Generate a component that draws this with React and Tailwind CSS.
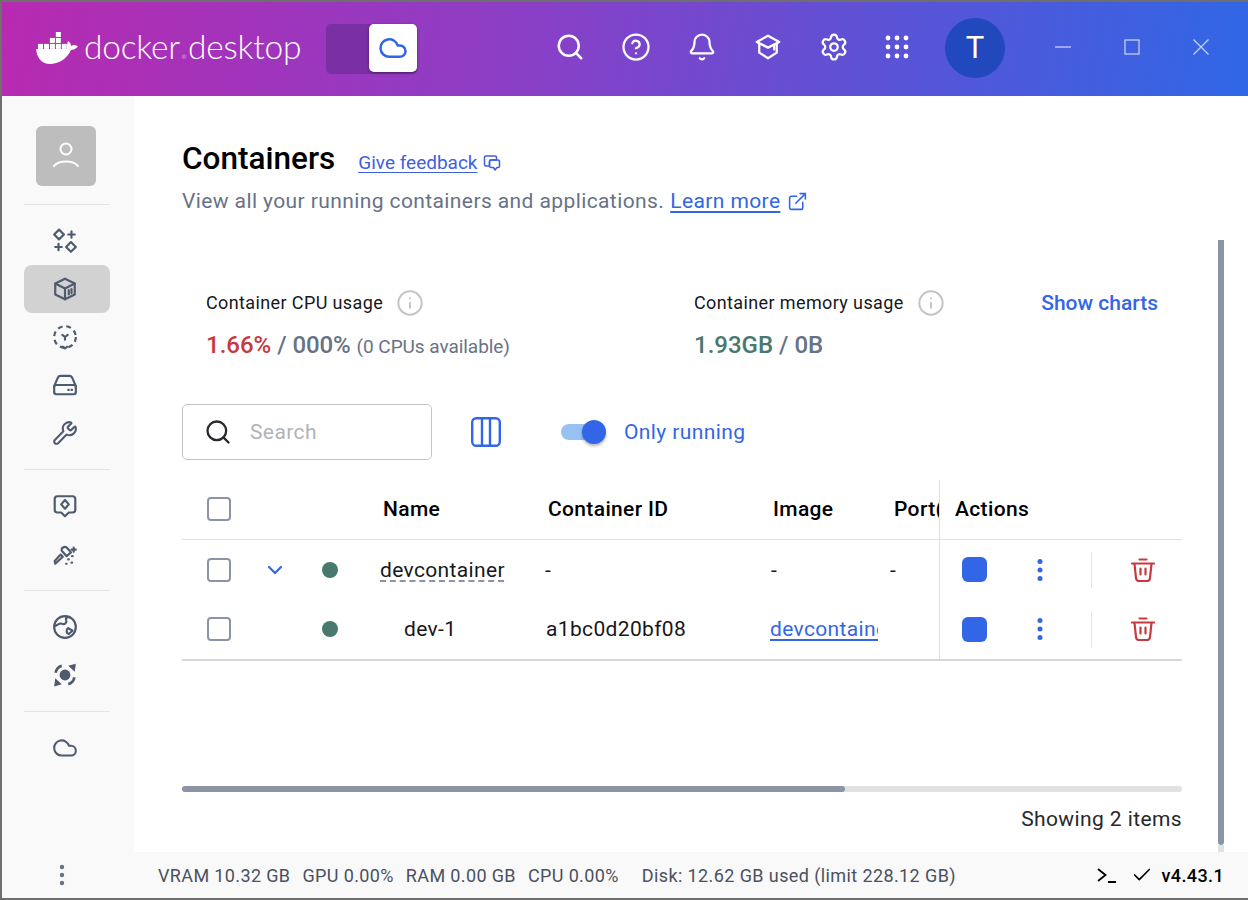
import React from 'react'
import { Search, CircleHelp, Bell, Settings, Cloud, Wrench, Check, ChevronDown, ExternalLink, Info } from 'lucide-react'

const Stroke = ({ size = 24, width = 2, children, className = '' }) => (
  <svg width={size} height={size} viewBox="0 0 24 24" fill="none" stroke="currentColor" strokeWidth={width} strokeLinecap="round" strokeLinejoin="round" className={className}>
    {children}
  </svg>
)

function Whale() {
  const boxes = [
    [21, 0], [14, 7], [21, 7], [7, 14], [14, 14], [21, 14], [0, 14], [28, 14],
  ]
  return (
    <svg width="43" height="34" viewBox="0 0 43 34" fill="white">
      {boxes.map(([x, y]) => (
        <rect key={x + '-' + y} x={x * 0.85 + 2} y={y * 0.85 + 1} width="5" height="5" />
      ))}
      <path d="M0 18 H31 C31 15 31 12 32 10 C34 11 35 13 35 15 C38 13 40 14 42 15.500 C40 18 37 19 35 19 C31 28 22 33 14 33 C6 33 1 27 0 18 Z" />
    </svg>
  )
}

function HeaderBar() {
  return (
    <div className="h-[94px] shrink-0 flex items-center bg-[linear-gradient(100deg,#b72ab0_0%,#8a3fc6_42%,#5c52d6_70%,#2f67e6_100%)] text-white">
      <div className="ml-[34px] mt-[-3px]"><Whale /></div>
      <div className="ml-[5px] mt-[-4px] w-[218px] whitespace-nowrap flex items-baseline font-['Lato',sans-serif] font-light text-[33.500px] leading-none tracking-[-0.2px]">
        <span>docker</span>
        <span className="w-[8px] text-[6px] tracking-normal text-center">®</span>
        <span>desktop</span>
      </div>
      <div className="ml-[24px] mt-[-1px] w-[91px] h-[50px] rounded-[5px] bg-[#7b2fa5] flex justify-end">
        <div className="w-[48px] h-[48px] rounded-[5px] bg-white shadow-[0_1px_3px_rgba(0,0,0,0.4)] flex items-center justify-center text-[#2f66e6]">
          <Cloud size={30} strokeWidth={2} />
        </div>
      </div>
      <div className="ml-[138px] mt-[-4px] flex items-center gap-[36px]">
        <Search size={30} strokeWidth={2} />
        <CircleHelp size={30} strokeWidth={1.8} />
        <Bell size={30} strokeWidth={1.8} />
        <Stroke size={30} width={1.8}>
          <path d="M12 3 L21 8 L12 12.500 L3 8 Z" />
          <path d="M5 9.500 V16.500 L12 21 L19 16.500 V9.500" />
          <path d="M17 10 V14" />
        </Stroke>
        <Settings size={30} strokeWidth={1.8} />
        <svg className="ml-[-3px]" width="30" height="30" viewBox="0 0 30 30" fill="white">
          {[6, 15, 24].map((y) => [6, 15, 24].map((x) => (
            <circle key={x + '-' + y} cx={x} cy={y} r="2.400" />
          )))}
        </svg>
      </div>
      <div className="ml-[33px] mt-[-2px] w-[60px] h-[60px] rounded-full bg-[#2148bc] flex items-center justify-center font-['Roboto',sans-serif] text-[31px]">T</div>
      <div className="ml-[50px] mt-[-4px] flex items-center gap-[53px] text-white/70">
        <svg width="16" height="16" viewBox="0 0 16 16" fill="none" stroke="currentColor" strokeWidth="1.300"><path d="M0 8 H16" /></svg>
        <svg width="16" height="16" viewBox="0 0 16 16" fill="none" stroke="currentColor" strokeWidth="1.300"><rect x="1" y="1" width="14" height="14" /></svg>
        <svg width="16" height="16" viewBox="0 0 16 16" fill="none" stroke="currentColor" strokeWidth="1.300"><path d="M0.500 0.500 L15.500 15.500 M15.500 0.500 L0.500 15.500" /></svg>
      </div>
    </div>
  )
}

function NavItem({ active, children }) {
  return (
    <div className={active ? 'h-[48px] pr-[4px] rounded-[8px] bg-[#d2d2d2] flex items-center justify-center text-[#4e5a6e]' : 'h-[48px] pr-[4px] flex items-center justify-center text-[#4e5a6e]'}>
      {children}
    </div>
  )
}

function Sidebar() {
  return (
    <div className="w-[132px] shrink-0 bg-[#f9f9fa] pt-[30px] pl-[22px] pr-[24px]">
      <div className="ml-[12px] w-[60px] h-[60px] rounded-[6px] bg-[#bdbdbd] flex items-center justify-center text-white">
        <svg width="28" height="28" viewBox="0 0 28 28" fill="none" stroke="currentColor" strokeWidth="2" strokeLinecap="round">
          <circle cx="14" cy="7" r="5.500" />
          <path d="M2 24 C7 18 21 18 26 24" />
        </svg>
      </div>
      <div className="h-px bg-[#e4e4e4] mt-[18px] mb-[12px]" />
      <NavItem>
        <Stroke size={26} width={2}>
          <path d="M6.500 1.500 L11 6 L6.500 10.500 L2 6 Z" />
          <path d="M17.500 13 L22 17.500 L17.500 22 L13 17.500 Z" />
          <path d="M18 3 V9 M15 6 H21 M6 14.500 V20.500 M3 17.500 H9" />
        </Stroke>
      </NavItem>
      <NavItem active>
        <Stroke size={26} width={2}>
          <path d="M12 2.500 L21 7 V17 L12 21.500 L3 17 V7 Z" />
          <path d="M3 7 L12 11.500 L21 7 M12 11.500 V21.500" />
          <path d="M15.500 13 V17 M18 12 V16" />
        </Stroke>
      </NavItem>
      <NavItem>
        <Stroke size={26} width={2}>
          <circle cx="12" cy="12" r="10" strokeDasharray="4.500 3.500" strokeLinecap="butt" />
          <path d="M9.500 10 L12 12 L14.500 10 M12 12 V14.500" />
          <path d="M10 21 L12 22.500 L14 21" />
        </Stroke>
      </NavItem>
      <NavItem>
        <Stroke size={26} width={2}>
          <path d="M2 13 L5.500 5 C6 4 7 3.500 8 3.500 H16 C17 3.500 18 4 18.500 5 L22 13" />
          <rect x="2" y="12" width="20" height="8.500" rx="2" />
          <path d="M15 16.500 H15.500 M18 16.500 H18.500" />
        </Stroke>
      </NavItem>
      <NavItem><Wrench size={26} strokeWidth={1.9} /></NavItem>
      <div className="h-px bg-[#e4e4e4] my-[12px]" />
      <NavItem>
        <Stroke size={26} width={2}>
          <path d="M5 3 H19 C20.500 3 21.500 4 21.500 5.500 V15.500 C21.500 17 20.500 18 19 18 H15.500 L12 21.500 L8.500 18 H5 C3.500 18 2.500 17 2.500 15.500 V5.500 C2.500 4 3.500 3 5 3 Z" />
          <path d="M12 6.500 L15.500 10.500 L12 14.500 L8.500 10.500 Z" />
        </Stroke>
      </NavItem>
      <NavItem>
        <Stroke size={26} width={2}>
          <path d="M3 21 L10 14.500 L8 12.500 L2.500 18.500 Z" />
          <path d="M9 7 C11 5 13 5 14 6.500 L17.500 10.500 L13.500 14 L9 9 Z" />
          <path d="M20 6 V10 M18 8 H22 M15 17 H15.500 M18.500 14 H19 M13 21 H13.500 M18 20 H18.500" />
        </Stroke>
      </NavItem>
      <div className="h-px bg-[#e4e4e4] my-[12px]" />
      <NavItem>
        <Stroke size={26} width={2}>
          <circle cx="12" cy="12" r="10" />
          <path d="M3 11 C6 10 7 8 9 9 C12 10 14 8 13 5 C12.500 3.500 14 2.500 16 3" />
          <path d="M15 13 L19 15.500 L15.500 18.500 C13 18 13 14 15 13 Z" />
        </Stroke>
      </NavItem>
      <NavItem>
        <svg width="26" height="26" viewBox="0 0 24 24" fill="currentColor">
          <circle cx="12" cy="12" r="5" />
          <path d="M22 1.500 L21 9 L15 3.500 Z M2 22.500 L3 15 L9 20.500 Z" />
          <path d="M3.500 10 C3.500 7 6 4 9 3.500" fill="none" stroke="currentColor" strokeWidth="2.500" />
          <path d="M20.500 14 C20.500 17 18 20 15 20.500" fill="none" stroke="currentColor" strokeWidth="2.500" />
        </svg>
      </NavItem>
      <div className="h-px bg-[#e4e4e4] my-[12px]" />
      <NavItem><Cloud size={26} strokeWidth={1.9} /></NavItem>
    </div>
  )
}

function Checkbox() {
  return <div className="w-[24px] h-[24px] rounded-[4px] border-2 border-[#8b93a5] bg-white" />
}

const rowGrid = 'grid grid-cols-[76px_56px_61px_165px_225px_121px_53px_243px]'

function Actions() {
  return (
    <div className="h-full border-l border-[#dfe0e3] flex items-center pl-[22px]">
      <div className="w-[25px] h-[25px] rounded-[6px] bg-[#3366e6]" />
      <div className="ml-[41px] w-[24px] flex justify-center text-[#3366e6]">
        <svg width="6" height="24" viewBox="0 0 6 24" fill="currentColor">
          <circle cx="3" cy="3.500" r="2.500" /><circle cx="3" cy="12" r="2.500" /><circle cx="3" cy="20.500" r="2.500" />
        </svg>
      </div>
      <div className="ml-[39px] w-px h-[36px] bg-[#e6e6e9]" />
      <div className="ml-[39px] text-[#c8393f]">
        <svg width="24" height="24" viewBox="0 0 24 24" fill="none" stroke="currentColor" strokeWidth="2.200" strokeLinecap="round" strokeLinejoin="round">
          <path d="M1 5.500 H23 M8.500 1.500 H15.500" />
          <path d="M3.500 6 L5 20 C5.200 22 6 23 8 23 H16 C18 23 18.800 22 19 20 L20.500 6" />
          <path d="M9.500 10.500 V16.500 M14.500 10.500 V16.500" />
        </svg>
      </div>
    </div>
  )
}

function Table() {
  return (
    <div className="mt-[20px] text-[21px] tracking-[0.35px] text-[#17181a]">
      <div className={rowGrid + ' h-[60px] items-center border-b border-[#dfe0e3] font-medium text-black'}>
        <div className="pl-[25px]"><Checkbox /></div>
        <div />
        <div />
        <div className="pl-[8px] pt-[2px]">Name</div>
        <div className="pl-[8px] pt-[2px]">Container ID</div>
        <div className="pl-[8px] pt-[2px]">Image</div>
        <div className="pl-[8px] pt-[2px] overflow-hidden whitespace-nowrap">Port(s)</div>
        <div className="h-full border-l border-[#dfe0e3] flex items-center pl-[15px] pt-[2px]">Actions</div>
      </div>
      <div className={rowGrid + ' h-[60px] items-center'}>
        <div className="pl-[25px]"><Checkbox /></div>
        <div className="pl-[5px] text-[#3366e6]"><ChevronDown size={24} strokeWidth={2.2} /></div>
        <div className="pl-[8px]"><div className="w-[16px] h-[16px] rounded-full bg-[#47796f]" /></div>
        <div className="pl-[5px] pt-[2px]"><span className="underline decoration-dashed decoration-[#8b93a5] underline-offset-[4px]">devcontainer</span></div>
        <div className="pl-[5px] pt-[2px]">-</div>
        <div className="pl-[6px] pt-[2px]">-</div>
        <div className="pl-[4px] pt-[2px]">-</div>
        <Actions />
      </div>
      <div className={rowGrid + ' h-[61px] items-center border-b-2 border-[#d5d7dc]'}>
        <div className="pl-[25px]"><Checkbox /></div>
        <div />
        <div className="pl-[8px]"><div className="w-[16px] h-[16px] rounded-full bg-[#47796f]" /></div>
        <div className="pl-[29px] pt-[2px]">dev-1</div>
        <div className="pl-[6px] pt-[2px]">a1bc0d20bf08</div>
        <div className="pl-[5px] pt-[2px]">
          <div className="w-[108px] overflow-hidden whitespace-nowrap text-[#3366e6] underline underline-offset-[3px]">devcontainer</div>
        </div>
        <div />
        <Actions />
      </div>
    </div>
  )
}

export default function App() {
  return (
    <div className="w-[1248px] h-[900px] overflow-hidden flex flex-col bg-white border-y-2 border-l-2 border-[#6f6f6f] font-['Roboto',sans-serif]">
      <HeaderBar />
      <div className="flex flex-1 min-h-0">
        <Sidebar />
        <div className="flex-1 flex min-w-0">
          <div className="w-[1000px] ml-[48px] shrink-0">
            <div className="mt-[45px] flex items-center h-[36px]">
              <h1 className="text-[31.500px] font-medium text-black leading-none">Containers</h1>
              <a className="ml-[23px] mt-[8px] text-[19px] text-[#3f60dd] underline underline-offset-[3px]">Give feedback</a>
              <svg className="ml-[5px] mt-[8px] text-[#3f60dd]" width="18" height="18" viewBox="0 0 18 18" fill="none" stroke="currentColor" strokeWidth="1.500" strokeLinejoin="round">
                <path d="M3 2 H12 C13 2 13.500 2.500 13.500 3.500 V6 H8 C7 6 6.500 6.500 6.500 7.500 V12 H3 C2 12 1.500 11.500 1.500 10.500 V3.500 C1.500 2.500 2 2 3 2 Z" />
                <path d="M8 6 H15 C16 6 16.500 6.500 16.500 7.500 V12 C16.500 13 16 13.500 15 13.500 H14 L12 16 L10.500 13.500 H8 C7 13.500 6.500 13 6.500 12 V7.500 C6.500 6.500 7 6 8 6 Z" />
              </svg>
            </div>
            <div className="mt-[9px] flex items-center text-[21px] tracking-[0.4px] text-[#677285]">
              <span>View all your running containers and applications.</span>
              <a className="ml-[6px] text-[#3366e6] underline underline-offset-[3px]">Learn more</a>
              <ExternalLink className="ml-[7px] text-[#3366e6]" size={21} strokeWidth={1.8} />
            </div>
            <div className="mt-[71px] ml-[24px] flex">
              <div className="w-[488px]">
                <div className="flex items-center h-[28px] text-[18px] tracking-[0.38px] text-[#17181a]">
                  Container CPU usage
                  <Info className="ml-[13px] text-[#c4c4c4]" size={28} strokeWidth={1.7} />
                </div>
                <div className="mt-[10px] flex items-baseline text-[24px] font-medium text-[#677285]">
                  <span className="text-[#c8393f]">1.66%</span>
                  <span className="ml-[6px] tracking-[-0.1px]">/ 000%</span>
                  <span className="ml-[6px] text-[19px] font-normal tracking-[-0.05px]">(0 CPUs available)</span>
                </div>
              </div>
              <div className="flex-1">
                <div className="flex items-center h-[28px] text-[18px] tracking-[0.38px] text-[#17181a]">
                  Container memory usage
                  <Info className="ml-[13px] text-[#c4c4c4]" size={28} strokeWidth={1.7} />
                  <a className="ml-[auto] mr-[24px] mt-[2px] text-[21px] font-medium tracking-normal text-[#3366e6]">Show charts</a>
                </div>
                <div className="mt-[10px] flex items-baseline text-[24px] font-medium text-[#677285]">
                  <span className="text-[#47796f]">1.93GB</span>
                  <span className="ml-[6px]">/ 0B</span>
                </div>
              </div>
            </div>
            <div className="mt-[41px] flex items-center">
              <div className="w-[250px] h-[56px] rounded-[5px] border border-[#c4c4c4] flex items-center pl-[21px] text-[21px] tracking-[0.4px] text-[#b0b3b8]">
                <Search className="text-[#26282c]" size={28} strokeWidth={2} />
                <span className="ml-[18px] mt-[2px]">Search</span>
              </div>
              <svg className="ml-[39px] text-[#3366e6]" width="30" height="30" viewBox="0 0 30 30" fill="none" stroke="currentColor" strokeWidth="2.400">
                <rect x="1.200" y="1.200" width="27.600" height="27.600" rx="4" />
                <path d="M11 1.200 V28.800 M19 1.200 V28.800" />
              </svg>
              <div className="ml-[60px] relative w-[46px] h-[24px] flex items-center">
                <div className="w-[36px] h-[16px] rounded-full bg-[#96c1f2]" />
                <div className="absolute left-[21px] w-[24px] h-[24px] rounded-full bg-[#3366e6] shadow-[0_2px_3px_rgba(0,0,0,0.3)]" />
              </div>
              <span className="ml-[17px] mt-[2px] text-[21px] tracking-[0.4px] text-[#3366e6]">Only running</span>
            </div>
            <Table />
            <div className="mt-[125px] h-[6px] rounded-full bg-[#e2e2e2]">
              <div className="w-[663px] h-[6px] rounded-full bg-[#8b93a5]" />
            </div>
            <div className="mt-[12px] text-right text-[21px] tracking-[0.4px] text-[#26282c]">Showing 2 items</div>
          </div>
          <div className="ml-[36px] w-[6px] flex flex-col pt-[144px]">
            <div className="flex-1 rounded-b-full bg-[#8b93a5]" />
            <div className="h-[7px] bg-[#e2e2e2]" />
          </div>
        </div>
      </div>
      <div className="h-[46px] shrink-0 bg-[#f9f9fa] flex items-center text-[18px] tracking-[0.37px] text-[#4a5160]">
        <div className="ml-[50px] text-[#677285]">
          <svg width="20" height="22" viewBox="0 0 20 22" fill="currentColor">
            <circle cx="10" cy="3" r="2.200" /><circle cx="10" cy="11" r="2.200" /><circle cx="10" cy="19" r="2.200" />
          </svg>
        </div>
        <div className="ml-[86px] flex gap-[12px]">
          <span>VRAM 10.32 GB</span>
          <span>GPU 0.00%</span>
          <span>RAM 0.00 GB</span>
          <span>CPU 0.00%</span>
        </div>
        <span className="ml-[23px] tracking-[0.4px]">Disk: 12.62 GB used (limit 228.12 GB)</span>
        <span className="ml-auto text-black flex items-center">
          <svg width="20" height="20" viewBox="0 0 20 20" fill="none" stroke="currentColor" strokeWidth="1.800">
            <path d="M1 4 L8.500 10 L1 16 M11 17 H19" />
          </svg>
          <Check className="ml-[14px]" size={22} strokeWidth={1.8} />
          <span className="ml-[9px] mr-[24px] font-medium">v4.43.1</span>
        </span>
      </div>
    </div>
  )
}
